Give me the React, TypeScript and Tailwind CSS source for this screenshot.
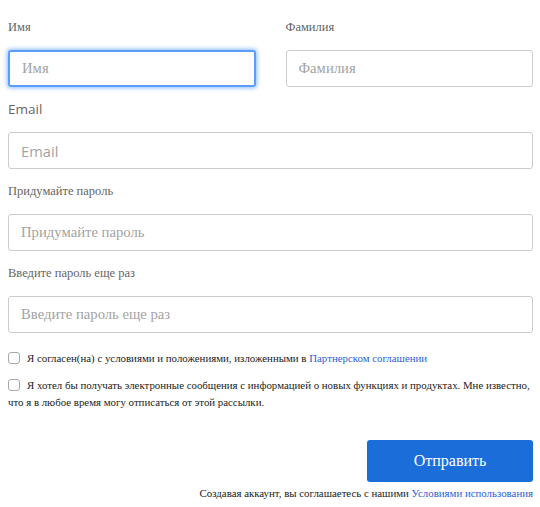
import React, { useState } from "react";

const serif = "[font-family:Liberation_Serif,Times_New_Roman,serif]";
const sans = "[font-family:Open_Sans,Liberation_Sans,sans-serif]";

type FieldProps = {
  label: string;
  placeholder: string;
  font: string;
  labelSize: string;
  focused?: boolean;
  type?: string;
};

const Field: React.FC<FieldProps> = ({ label, placeholder, font, labelSize, focused, type = "text" }) => {
  return (
    <div className="flex flex-col">
      <label className={`${font} ${labelSize} leading-[20px] text-[#666666] mb-[13px]`}>{label}</label>
      <input
        type={type}
        placeholder={placeholder}
        className={`${font} h-[37px] w-full rounded-[3px] px-[12px] text-[14.7px] text-[#333] placeholder:text-[#a3a3a3] outline-none ${
          focused
            ? "border-2 border-[#5b9dff] shadow-[0_0_4px_1px_rgba(91,157,255,0.7)]"
            : "border border-[#cccccc]"
        }`}
      />
    </div>
  );
};

const App: React.FC = () => {
  const [agree, setAgree] = useState(false);
  const [news, setNews] = useState(false);

  return (
    <div className="w-[540px] min-h-[507px] bg-white pl-[8px] pr-[7px] pt-[17px]">
      {/* Name row */}
      <div className="grid grid-cols-2 gap-[30px]">
        <Field label="Имя" placeholder="Имя" font={serif} labelSize="text-[12.5px]" focused />
        <Field label="Фамилия" placeholder="Фамилия" font={serif} labelSize="text-[12.5px]" />
      </div>

      <div className="mt-[12px]">
        <Field label="Email" placeholder="Email" font={sans} labelSize="text-[13.5px]" type="email" />
      </div>
      <div className="mt-[12px]">
        <Field label="Придумайте пароль" placeholder="Придумайте пароль" font={serif} labelSize="text-[12.5px]" type="password" />
      </div>
      <div className="mt-[12px]">
        <Field label="Введите пароль еще раз" placeholder="Введите пароль еще раз" font={serif} labelSize="text-[12.5px]" type="password" />
      </div>

      {/* Checkboxes */}
      <div className="[font-family:Liberation_Serif,Times_New_Roman,serif] text-[10.85px] leading-[17px] text-[#222] mt-[17px]">
        <label className="block">
          <input
            type="checkbox"
            checked={agree}
            onChange={() => setAgree(!agree)}
            className="appearance-none w-[12px] h-[12px] border border-[#a8a8a8] rounded-[3px] align-[-2px] mr-[7px] bg-white"
          />
          Я согласен(на) с условиями и положениями, изложенными в{" "}
          <a href="#" className="text-[#2a5fd6]">Партнерском соглашении</a>
        </label>
        <label className="block mt-[10px]">
          <input
            type="checkbox"
            checked={news}
            onChange={() => setNews(!news)}
            className="appearance-none w-[12px] h-[12px] border border-[#a8a8a8] rounded-[3px] align-[-2px] mr-[7px] bg-white"
          />
          Я хотел бы получать электронные сообщения с информацией о новых функциях и продуктах. Мне известно, что я в любое время могу отписаться от этой рассылки.
        </label>
      </div>

      {/* Submit */}
      <div className="flex flex-col items-end mt-[29px]">
        <button className="[font-family:Liberation_Serif,Times_New_Roman,serif] w-[166px] h-[42px] rounded-[3px] bg-[#1b6ed9] text-white text-[16px] font-medium">
          Отправить
        </button>
        <p className="[font-family:Liberation_Serif,Times_New_Roman,serif] text-[10.85px] leading-[17px] text-[#222] mt-[3px]">
          Создавая аккаунт, вы соглашаетесь с нашими{" "}
          <a href="#" className="text-[#2a5fd6]">Условиями использования</a>
        </p>
      </div>
    </div>
  );
};

export default App;
